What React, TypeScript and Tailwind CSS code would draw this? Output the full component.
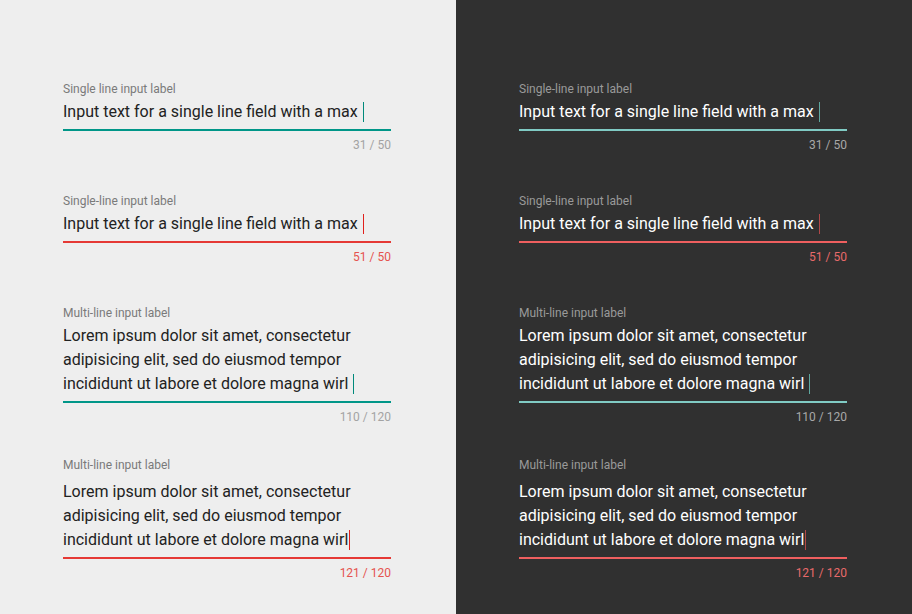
import React from "react";

type Field = {
  lines: string[];
  counter: string;
  error: boolean;
  cursorGap: boolean;
  labelGap: string;
};

const single = "Input text for a single line field with a max";
const multi = [
  "Lorem ipsum dolor sit amet, consectetur",
  "adipisicing elit, sed do eiusmod tempor",
  "incididunt ut labore et dolore magna wirl",
];

function FieldView({ f, dark, label }: { f: Field; dark: boolean; label: string }) {
  const line = f.error
    ? dark
      ? "bg-[#ef5f5f]"
      : "bg-[#e53935]"
    : dark
    ? "bg-[#80cbc4]"
    : "bg-[#009688]";
  const cursor = f.error
    ? dark
      ? "bg-[#b04848]"
      : "bg-[#e0201c]"
    : dark
    ? "bg-[#5fa8a0]"
    : "bg-[#00897b]";
  const counterColor = f.error
    ? dark
      ? "text-[#e86a6a]"
      : "text-[#e5534f]"
    : dark
    ? "text-[#a8a8a8]"
    : "text-[#a3a3a3]";
  return (
    <div className="w-[328px]">
      <div
        className={`text-[12px] leading-[16px] ${dark ? "text-[#9a9a9a]" : "text-[#7a7a7a]"}`}
      >
        {label}
      </div>
      <div
        className={`${f.labelGap} text-[16px] leading-[24px] ${dark ? "text-white" : "text-[#222222]"}`}
      >
        {f.lines.map((l, i) => (
          <div key={i} className="whitespace-nowrap">
            {l}
            {i === f.lines.length - 1 && (
              <span
                className={`inline-block w-px h-[20px] align-[-5px] ${cursor} ${f.cursorGap ? "ml-[5px]" : "ml-[1px]"}`}
              />
            )}
          </div>
        ))}
      </div>
      <div className={`mt-[5px] h-[2px] ${line}`} />
      <div className={`mt-[6px] text-[12px] leading-[16px] text-right ${counterColor}`}>
        {f.counter}
      </div>
    </div>
  );
}

function Column({ dark }: { dark: boolean }) {
  const fields: { f: Field; l: [string, string] }[] = [
    {
      f: { lines: [single], counter: "31 / 50", error: false, cursorGap: true, labelGap: "mt-[3px]" },
      l: ["Single line input label", "Single-line input label"],
    },
    {
      f: { lines: [single], counter: "51 / 50", error: true, cursorGap: true, labelGap: "mt-[3px]" },
      l: ["Single-line input label", "Single-line input label"],
    },
    {
      f: { lines: multi, counter: "110 / 120", error: false, cursorGap: true, labelGap: "mt-[3px]" },
      l: ["Multi-line input label", "Multi-line input label"],
    },
    {
      f: { lines: multi, counter: "121 / 120", error: true, cursorGap: false, labelGap: "mt-[7px]" },
      l: ["Multi-line input label", "Multi-line input label"],
    },
  ];
  return (
    <div
      className={`w-[456px] h-[614px] pt-[81px] pl-[63px] ${dark ? "bg-[#303030]" : "bg-[#eeeeee]"}`}
    >
      <div className="flex flex-col">
        <FieldView f={fields[0].f} dark={dark} label={fields[0].l[dark ? 1 : 0]} />
        <div className="h-[40px]" />
        <FieldView f={fields[1].f} dark={dark} label={fields[1].l[dark ? 1 : 0]} />
        <div className="h-[40px]" />
        <FieldView f={fields[2].f} dark={dark} label={fields[2].l[dark ? 1 : 0]} />
        <div className="h-[32px]" />
        <FieldView f={fields[3].f} dark={dark} label={fields[3].l[dark ? 1 : 0]} />
      </div>
    </div>
  );
}

export default function App() {
  return (
    <div
      className="flex w-[912px] h-[614px] overflow-hidden"
      style={{ fontFamily: "Roboto, 'Noto Sans', sans-serif" }}
    >
      <Column dark={false} />
      <Column dark={true} />
    </div>
  );
}
